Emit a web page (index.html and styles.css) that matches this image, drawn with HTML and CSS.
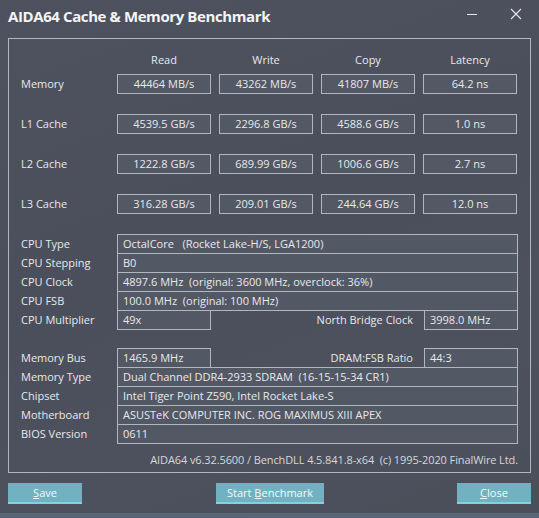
FILE: index.html
```html
<!DOCTYPE html>
<html>
<head>
<meta charset="utf-8">
<link rel="stylesheet" href="styles.css">
</head>
<body>
<div class="window">
  <div class="titlebar">
    <div class="title">AIDA64 Cache &amp; Memory Benchmark</div>
    <div class="controls">
      <svg class="ctl min" width="12" height="12" viewBox="0 0 12 12"><line x1="1" y1="6.5" x2="11" y2="6.5" stroke="#e8e8e8" stroke-width="1"/></svg>
      <svg class="ctl close" width="12" height="12" viewBox="0 0 12 12"><path d="M1 1 L11 11 M11 1 L1 11" stroke="#e8e8e8" stroke-width="1.1" fill="none"/></svg>
    </div>
  </div>

  <div class="frame">
    <div class="bench-head">
      <div></div>
      <div class="hdr">Read</div>
      <div class="hdr">Write</div>
      <div class="hdr">Copy</div>
      <div class="hdr">Latency</div>
    </div>
    <div class="bench">
      <div class="lbl">Memory</div>
      <div class="bbox">44464 MB/s</div>
      <div class="bbox">43262 MB/s</div>
      <div class="bbox">41807 MB/s</div>
      <div class="bbox">64.2 ns</div>

      <div class="lbl">L1 Cache</div>
      <div class="bbox">4539.5 GB/s</div>
      <div class="bbox">2296.8 GB/s</div>
      <div class="bbox">4588.6 GB/s</div>
      <div class="bbox">1.0 ns</div>

      <div class="lbl">L2 Cache</div>
      <div class="bbox">1222.8 GB/s</div>
      <div class="bbox">689.99 GB/s</div>
      <div class="bbox">1006.6 GB/s</div>
      <div class="bbox">2.7 ns</div>

      <div class="lbl">L3 Cache</div>
      <div class="bbox">316.28 GB/s</div>
      <div class="bbox">209.01 GB/s</div>
      <div class="bbox">244.64 GB/s</div>
      <div class="bbox">12.0 ns</div>
    </div>

    <div class="info cpu">
      <div class="irow"><div class="ilbl">CPU Type</div><div class="ival wide">OctalCore&nbsp;&nbsp;&nbsp;(Rocket Lake-H/S, LGA1200)</div></div>
      <div class="irow"><div class="ilbl">CPU Stepping</div><div class="ival wide">B0</div></div>
      <div class="irow"><div class="ilbl">CPU Clock</div><div class="ival wide">4897.6 MHz&nbsp;&nbsp;(original: 3600 MHz, overclock: 36%)</div></div>
      <div class="irow"><div class="ilbl">CPU FSB</div><div class="ival wide">100.0 MHz&nbsp;&nbsp;(original: 100 MHz)</div></div>
      <div class="irow"><div class="ilbl">CPU Multiplier</div><div class="ival small">49x</div><div class="rlbl">North Bridge Clock</div><div class="ival small">3998.0 MHz</div></div>
    </div>

    <div class="info mem">
      <div class="irow"><div class="ilbl">Memory Bus</div><div class="ival small">1465.9 MHz</div><div class="rlbl">DRAM:FSB Ratio</div><div class="ival small">44:3</div></div>
      <div class="irow"><div class="ilbl">Memory Type</div><div class="ival wide">Dual Channel DDR4-2933 SDRAM&nbsp;&nbsp;(16-15-15-34 CR1)</div></div>
      <div class="irow"><div class="ilbl">Chipset</div><div class="ival wide">Intel Tiger Point Z590, Intel Rocket Lake-S</div></div>
      <div class="irow"><div class="ilbl">Motherboard</div><div class="ival wide">ASUSTeK COMPUTER INC. ROG MAXIMUS XIII APEX</div></div>
      <div class="irow"><div class="ilbl">BIOS Version</div><div class="ival wide">0611</div></div>
    </div>

    <div class="footer">AIDA64 v6.32.5600 / BenchDLL 4.5.841.8-x64&nbsp;&nbsp;(c) 1995-2020 FinalWire Ltd.</div>
  </div>

  <div class="buttons">
    <div class="btn save"><u>S</u>ave</div>
    <div class="btn start">Start <u>B</u>enchmark</div>
    <div class="btn close-btn"><u>C</u>lose</div>
  </div>
  <div class="stripe"></div>
</div>
</body>
</html>
```

FILE: styles.css
```css
* { box-sizing: border-box; }
html, body { margin: 0; padding: 0; }
body {
  width: 539px;
  height: 518px;
  overflow: hidden;
  background: #4b505c;
  font-family: "Open Sans", "Noto Sans", sans-serif;
  font-size: 11px;
  color: #e8e9eb;
}
.window {
  width: 539px;
  height: 518px;
  display: flex;
  flex-direction: column;
  background: linear-gradient(160deg, #4d525e 0%, #4a4f5b 45%, #4c515d 70%, #4a4f5a 100%);
}
.titlebar {
  height: 38px;
  display: flex;
  align-items: flex-start;
  justify-content: space-between;
}
.title {
  margin: 6px 0 0 8px;
  font-size: 15px;
  font-weight: 700;
  color: #f4f4f5;
  letter-spacing: -0.4px;
}
.controls {
  display: flex;
  gap: 32px;
  margin: 8px 17px 0 0;
}
.ctl { display: block; }
.frame {
  margin-left: 8px;
  width: 523px;
  height: 435px;
  border: 1px solid #b3b6bc;
  padding: 13px 12px 0 12px;
  display: flex;
  flex-direction: column;
}
.bench-head,
.bench {
  display: grid;
  grid-template-columns: 88px repeat(4, 94px);
  column-gap: 8px;
}
.bench-head {
  margin-bottom: 6px;
}
.hdr {
  text-align: center;
  line-height: 16px;
}
.bench {
  grid-auto-rows: 20px;
  row-gap: 20px;
}
.lbl {
  line-height: 20px;
}
.bbox {
  height: 20px;
  border: 1px solid #b3b6bc;
  background: #535865;
  text-align: center;
  line-height: 18px;
}
.info {
  display: flex;
  flex-direction: column;
}
.cpu { margin-top: 20px; }
.mem { margin-top: 19px; }
.irow {
  height: 19px;
  display: flex;
}
.ilbl {
  width: 96px;
  line-height: 20px;
}
.ival {
  height: 20px;
  border: 1px solid #b3b6bc;
  background: #535865;
  padding-left: 5px;
  line-height: 18px;
  white-space: nowrap;
}
.wide { width: 401px; }
.small { width: 94px; }
.rlbl {
  flex: 1;
  text-align: right;
  padding-right: 11px;
  line-height: 20px;
}
.footer {
  margin-top: 9px;
  text-align: right;
  line-height: 16px;
  color: #d6d8dc;
  letter-spacing: -0.1px;
}
.buttons {
  margin-top: 10px;
  height: 21px;
  display: flex;
  padding-left: 8px;
}
.btn {
  height: 21px;
  background: #70b2c2;
  border-bottom: 2px solid #80d3dc;
  color: #f6f8f9;
  text-align: center;
  line-height: 19px;
}
.btn u { text-underline-offset: 1px; }
.save { width: 74px; }
.start { width: 108px; margin-left: 134px; }
.close-btn { width: 74px; margin-left: 133px; }
.stripe {
  margin-top: auto;
  height: 5px;
  background: #5a6577;
}
```
